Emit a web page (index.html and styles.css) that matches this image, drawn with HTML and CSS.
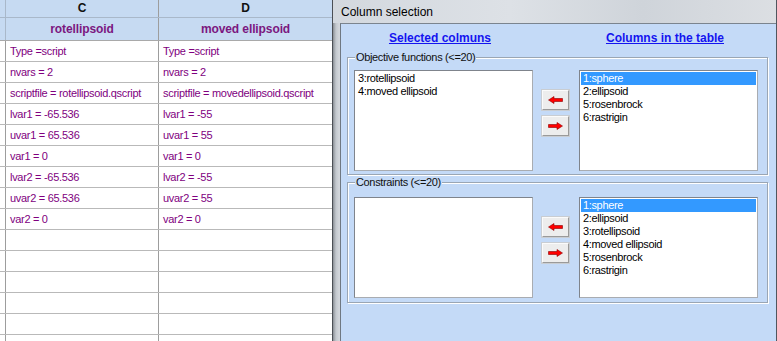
FILE: index.html
```html
<!DOCTYPE html>
<html lang="en">
<head>
    <meta charset="UTF-8">
    <title>Column selection</title>
    <link rel="stylesheet" href="styles.css">
</head>
<body>
<div class="screen">

    <!-- Spreadsheet behind the dialog -->
    <div class="sheet">
        <div class="row head-letters">
            <div class="cell stub"></div>
            <div class="cell col-c">C</div>
            <div class="cell col-d">D</div>
        </div>
        <div class="row head-names">
            <div class="cell stub"></div>
            <div class="cell col-c">rotellipsoid</div>
            <div class="cell col-d">moved ellipsoid</div>
        </div>
        <div class="row"><div class="cell stub"></div><div class="cell col-c">Type =script</div><div class="cell col-d">Type =script</div></div>
        <div class="row"><div class="cell stub"></div><div class="cell col-c">nvars = 2</div><div class="cell col-d">nvars = 2</div></div>
        <div class="row"><div class="cell stub"></div><div class="cell col-c">scriptfile = rotellipsoid.qscript</div><div class="cell col-d">scriptfile = movedellipsoid.qscript</div></div>
        <div class="row"><div class="cell stub"></div><div class="cell col-c">lvar1 = -65.536</div><div class="cell col-d">lvar1 = -55</div></div>
        <div class="row"><div class="cell stub"></div><div class="cell col-c">uvar1 = 65.536</div><div class="cell col-d">uvar1 = 55</div></div>
        <div class="row"><div class="cell stub"></div><div class="cell col-c">var1 = 0</div><div class="cell col-d">var1 = 0</div></div>
        <div class="row"><div class="cell stub"></div><div class="cell col-c">lvar2 = -65.536</div><div class="cell col-d">lvar2 = -55</div></div>
        <div class="row"><div class="cell stub"></div><div class="cell col-c">uvar2 = 65.536</div><div class="cell col-d">uvar2 = 55</div></div>
        <div class="row"><div class="cell stub"></div><div class="cell col-c">var2 = 0</div><div class="cell col-d">var2 = 0</div></div>
        <div class="row"><div class="cell stub"></div><div class="cell col-c"></div><div class="cell col-d"></div></div>
        <div class="row"><div class="cell stub"></div><div class="cell col-c"></div><div class="cell col-d"></div></div>
        <div class="row"><div class="cell stub"></div><div class="cell col-c"></div><div class="cell col-d"></div></div>
        <div class="row"><div class="cell stub"></div><div class="cell col-c"></div><div class="cell col-d"></div></div>
        <div class="row"><div class="cell stub"></div><div class="cell col-c"></div><div class="cell col-d"></div></div>
        <div class="row"><div class="cell stub"></div><div class="cell col-c"></div><div class="cell col-d"></div></div>
    </div>

    <!-- Dialog window -->
    <div class="window">
        <div class="titlebar">Column selection</div>
        <div class="client">
            <div class="captions">
                <a class="caption" href="#">Selected colmuns</a>
                <span></span>
                <a class="caption" href="#">Columns in the table</a>
            </div>

            <div class="group group-objectives">
                <div class="group-label">Objective functions (&lt;=20)</div>
                <div class="group-body">
                    <div class="listbox">
                        <div class="item">3:rotellipsoid</div>
                        <div class="item">4:moved ellipsoid</div>
                    </div>
                    <div class="movers">
                        <button class="mover">
                            <svg width="15" height="8" viewBox="0 0 15 8"><polygon points="0.5,4 6,0.5 6,2.5 14.5,2.5 14.5,5.5 6,5.5 6,7.5" fill="#ff0000" stroke="#8a0000" stroke-width="0.6"/></svg>
                        </button>
                        <button class="mover">
                            <svg width="15" height="8" viewBox="0 0 15 8"><polygon points="14.5,4 9,0.5 9,2.5 0.5,2.5 0.5,5.5 9,5.5 9,7.5" fill="#ff0000" stroke="#8a0000" stroke-width="0.6"/></svg>
                        </button>
                    </div>
                    <div class="listbox">
                        <div class="item selected">1:sphere</div>
                        <div class="item">2:ellipsoid</div>
                        <div class="item">5:rosenbrock</div>
                        <div class="item">6:rastrigin</div>
                    </div>
                </div>
            </div>

            <div class="group group-constraints">
                <div class="group-label">Constraints (&lt;=20)</div>
                <div class="group-body">
                    <div class="listbox"></div>
                    <div class="movers">
                        <button class="mover">
                            <svg width="15" height="8" viewBox="0 0 15 8"><polygon points="0.5,4 6,0.5 6,2.5 14.5,2.5 14.5,5.5 6,5.5 6,7.5" fill="#ff0000" stroke="#8a0000" stroke-width="0.6"/></svg>
                        </button>
                        <button class="mover">
                            <svg width="15" height="8" viewBox="0 0 15 8"><polygon points="14.5,4 9,0.5 9,2.5 0.5,2.5 0.5,5.5 9,5.5 9,7.5" fill="#ff0000" stroke="#8a0000" stroke-width="0.6"/></svg>
                        </button>
                    </div>
                    <div class="listbox">
                        <div class="item selected">1:sphere</div>
                        <div class="item">2:ellipsoid</div>
                        <div class="item">3:rotellipsoid</div>
                        <div class="item">4:moved ellipsoid</div>
                        <div class="item">5:rosenbrock</div>
                        <div class="item">6:rastrigin</div>
                    </div>
                </div>
            </div>
        </div>
    </div>

</div>
</body>
</html>
```

FILE: styles.css
```css
/* General */
body {
    margin: 0;
    font-family: "Liberation Sans", Arial, sans-serif;
}

.screen {
    display: flex;
    width: 777px;
    height: 341px;
    overflow: hidden;
    background: #ffffff;
}

/* Spreadsheet */
.sheet {
    width: 332px;
    flex: none;
    overflow: hidden;
}

.row {
    display: flex;
    height: 20px;
    border-bottom: 1px solid #b9b9b9;
}

.cell {
    box-sizing: border-box;
    height: 100%;
    padding-left: 4px;
    font-size: 11px;
    letter-spacing: -0.3px;
    line-height: 20px;
    color: #800080;
    white-space: nowrap;
    overflow: hidden;
}

.stub {
    width: 6px;
    padding: 0;
    border-right: 1px solid #9d9d9d;
}

.col-c {
    width: 153px;
    border-right: 1px solid #9d9d9d;
}

.col-d {
    flex: 1;
}

.head-letters,
.head-names {
    background: #c6daf2;
}

.head-letters {
    height: 17px;
    border-bottom-color: #a9b8ca;
}

.head-letters .cell {
    line-height: 17px;
    text-align: center;
    padding: 0;
    font-weight: bold;
    font-size: 12px;
    letter-spacing: 0;
    color: #111111;
}

.head-names {
    height: 22px;
    border-bottom-color: #a9a9a9;
}

.head-names .cell {
    line-height: 22px;
    text-align: center;
    padding: 0;
    font-weight: bold;
    font-size: 12px;
    letter-spacing: -0.1px;
    color: #7b1780;
}

.head-letters .stub,
.head-names .stub {
    border-right-color: #a9b8ca;
}

/* Dialog window */
.window {
    flex: 1;
    height: 341px;
    display: flex;
    flex-direction: column;
    border-left: 1px solid #4b4f55;
    border-right: 1px solid #50565e;
    background: linear-gradient(to right, #8b9096 0px, #c3c8ce 3px, #d2d6db 6px, #d2d6db 100%);
}

.titlebar {
    height: 23px;
    flex: none;
    padding-left: 8px;
    font-size: 12px;
    line-height: 24px;
    color: #000000;
    background: linear-gradient(to right, #d3d8de 0%, #dde1e6 40%, #cfd4da 70%, #dcdfe3 100%);
}

.client {
    flex: 1;
    margin-left: 7px;
    border-left: 1px solid #6f7882;
    border-top: 1px solid #7b848e;
    background: #c4daf7;
    font-size: 11px;
    letter-spacing: -0.35px;
}

/* Captions above the lists */
.captions {
    display: grid;
    grid-template-columns: 178px 47px 178px;
    padding: 7px 0 0 10px;
    line-height: 14px;
}

.caption {
    text-align: center;
    font-size: 12px;
    font-weight: bold;
    letter-spacing: 0;
    color: #1414f0;
    text-decoration: underline;
}

/* Group boxes */
.group {
    margin: 12px 8px 0 6px;
    border: 1px solid #9aa6b4;
    box-shadow: inset 1px 1px 0 #ffffff, 1px 1px 0 #ffffff;
}

.group-label {
    width: fit-content;
    height: 13px;
    margin: -7px 0 -6px 7px;
    padding: 0 1px;
    line-height: 13px;
    background: #c4daf7;
    color: #101010;
}

.group-body {
    display: flex;
    align-items: flex-start;
    padding: 12px 0 3px 6px;
}

.group-constraints {
    margin-top: 7px;
}

.group-constraints .group-body {
    padding-top: 14px;
    padding-bottom: 4px;
}

/* List boxes */
.listbox {
    box-sizing: border-box;
    width: 179px;
    height: 101px;
    padding: 1px;
    background: #ffffff;
    border: 1px solid;
    border-color: #7f848c #a9acb1 #a9acb1 #7f848c;
    overflow: hidden;
}

.item {
    height: 13px;
    padding-left: 2px;
    line-height: 13px;
    color: #000000;
    white-space: nowrap;
}

.item.selected {
    background: #3399ff;
    color: #ffffff;
}

/* Arrow buttons */
.movers {
    display: flex;
    flex-direction: column;
    gap: 6px;
    margin: 20px 10px 0 9px;
}

.mover {
    display: flex;
    align-items: center;
    justify-content: center;
    width: 27px;
    height: 20px;
    padding: 0;
    background: #ededed;
    border: 1px solid;
    border-color: #fbfbfb #9a9a9a #9a9a9a #fbfbfb;
    box-shadow: 0 0 0 1px #c9cdd2;
}
```
